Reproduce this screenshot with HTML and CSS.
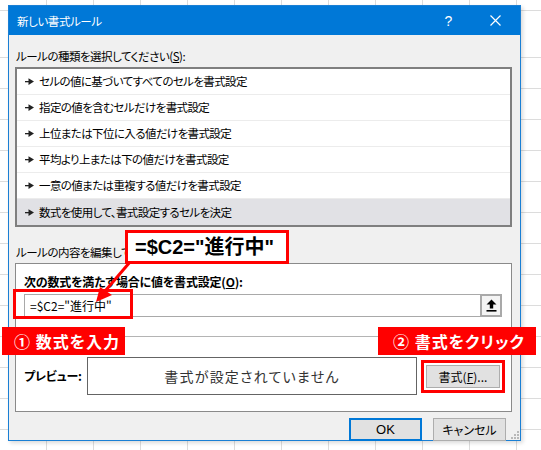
FILE: index.html
```html
<!DOCTYPE html>
<html lang="ja">
<head>
<meta charset="utf-8">
<title>新しい書式ルール</title>
<link rel="stylesheet" href="styles.css">
</head>
<body>
<div class="dialog">
  <div class="titlebar">
    <span class="title">新しい書式ルール</span>
    <span class="help">?</span>
    <span class="close"><svg width="11" height="11" viewBox="0 0 11 11"><path d="M0.5 0.5 L10.5 10.5 M10.5 0.5 L0.5 10.5" stroke="#fff" stroke-width="1.2" fill="none"/></svg></span>
  </div>
  <div class="content">
    <div class="label">ルールの種類を選択してください(<u>S</u>):</div>
    <ul class="rules">
      <li><svg class="bullet" width="9" height="7" viewBox="0 0 9 7"><rect x="0" y="3" width="4" height="1.3" fill="#222"/><polygon points="3.5,0.3 9,3.6 3.5,6.9" fill="#222"/></svg>セルの値に基づいてすべてのセルを書式設定</li>
      <li><svg class="bullet" width="9" height="7" viewBox="0 0 9 7"><rect x="0" y="3" width="4" height="1.3" fill="#222"/><polygon points="3.5,0.3 9,3.6 3.5,6.9" fill="#222"/></svg>指定の値を含むセルだけを書式設定</li>
      <li><svg class="bullet" width="9" height="7" viewBox="0 0 9 7"><rect x="0" y="3" width="4" height="1.3" fill="#222"/><polygon points="3.5,0.3 9,3.6 3.5,6.9" fill="#222"/></svg>上位または下位に入る値だけを書式設定</li>
      <li><svg class="bullet" width="9" height="7" viewBox="0 0 9 7"><rect x="0" y="3" width="4" height="1.3" fill="#222"/><polygon points="3.5,0.3 9,3.6 3.5,6.9" fill="#222"/></svg>平均より上または下の値だけを書式設定</li>
      <li><svg class="bullet" width="9" height="7" viewBox="0 0 9 7"><rect x="0" y="3" width="4" height="1.3" fill="#222"/><polygon points="3.5,0.3 9,3.6 3.5,6.9" fill="#222"/></svg>一意の値または重複する値だけを書式設定</li>
      <li class="selected"><svg class="bullet" width="9" height="7" viewBox="0 0 9 7"><rect x="0" y="3" width="4" height="1.3" fill="#222"/><polygon points="3.5,0.3 9,3.6 3.5,6.9" fill="#222"/></svg>数式を使用して、書式設定するセルを決定</li>
    </ul>
    <div class="label label2">ルールの内容を編集してください(<u>E</u>):</div>
    <div class="panel">
      <div class="label bold">次の数式を満たす場合に値を書式設定(<u>O</u>):</div>
      <div class="formula-row">
        <div class="input">=$C2="進行中"</div>
        <div class="refbtn"><svg width="11" height="13" viewBox="0 0 11 13"><polygon points="5.5,0.5 10.5,5.5 7.2,5.5 7.2,9.5 3.8,9.5 3.8,5.5 0.5,5.5" fill="#000"/><rect x="0.5" y="11" width="10" height="1.6" fill="#000"/></svg></div>
      </div>
      <div class="separator"></div>
      <div class="preview-row">
        <div class="label bold preview-label">プレビュー:</div>
        <div class="preview">書式が設定されていません</div>
        <div class="btn format">書式(<u>F</u>)...</div>
      </div>
    </div>
    <div class="footer">
      <div class="btn ok">OK</div>
      <div class="btn">キャンセル</div>
    </div>
  </div>
  <svg class="grip" width="8" height="8" viewBox="0 0 8 8"><rect x="6" y="0" width="2" height="2" fill="#b8b8b8"/><rect x="3" y="3" width="2" height="2" fill="#b8b8b8"/><rect x="6" y="3" width="2" height="2" fill="#b8b8b8"/><rect x="0" y="6" width="2" height="2" fill="#b8b8b8"/><rect x="3" y="6" width="2" height="2" fill="#b8b8b8"/><rect x="6" y="6" width="2" height="2" fill="#b8b8b8"/></svg>
</div>

<div class="hl-input"></div>
<svg class="arrow" width="60" height="50" viewBox="0 0 60 50"><line x1="38" y1="5" x2="14" y2="33" stroke="#ff0000" stroke-width="3"/><polygon points="4,45 8,30 20,38" fill="#ff0000"/></svg>
<div class="callout">=$C2="進行中"</div>
<div class="tag tag1">① 数式を入力</div>
<div class="tag tag2">② 書式をクリック</div>
</body>
</html>
```
FILE: styles.css
```css
html, body {
  margin: 0;
  padding: 0;
  width: 541px;
  height: 450px;
  overflow: hidden;
}
body {
  position: relative;
  font-family: "Noto Sans CJK JP", "Noto Sans", sans-serif;
  font-feature-settings: "palt";
  background-color: #ffffff;
  background-image:
    repeating-linear-gradient(180deg, transparent 0 30px, #dcdcdc 30px 31px),
    repeating-linear-gradient(90deg, transparent 0 46px, #dcdcdc 46px 47px);
  background-position: 0 27px, 0 0;
}
.dialog {
  position: absolute;
  left: 8px;
  top: 5px;
  width: 511px;
  height: 434px;
  border: 1px solid #1a7fd4;
  background: #f0f0f0;
  box-shadow: 2px 2px 4px rgba(0,0,0,0.15);
}
.titlebar {
  height: 29px;
  background: #0078d7;
  color: #fff;
  display: flex;
  align-items: center;
  padding-left: 8px;
  font-size: 11.5px;
  letter-spacing: -0.4px;
}
.title { flex: 1; }
.help {
  font-family: "Liberation Sans", sans-serif;
  font-size: 14px;
  margin-right: 38px;
}
.close { display: flex; margin-right: 19px; }
.content {
  padding: 13px 8px 9px 6px;
}
.label {
  font-size: 11.5px;
  letter-spacing: -0.5px;
  line-height: 16px;
  height: 16px;
  color: #000;
  white-space: nowrap;
  padding-left: 1px;
}
.bold {
  font-weight: 700;
  font-size: 12px;
  letter-spacing: -0.2px;
}
.rules {
  list-style: none;
  margin: 3px 0 0 0;
  padding: 0;
  border: 2px solid #7f7f7f;
  background: #fff;
}
.rules li {
  height: 25px;
  line-height: 25px;
  border-bottom: 1px solid #ececec;
  font-size: 11.5px;
  letter-spacing: -0.6px;
  display: flex;
  align-items: center;
  padding-left: 8px;
  color: #000;
}
.rules li:last-child { border-bottom: 0; height: 26px; }
.rules li.selected { background: #e1e1e5; }
.bullet { margin-right: 5px; flex: none; }
.label2 { margin-top: 17px; }
.panel {
  margin-top: 3px;
  height: 137px;
  border: 1px solid #8a8a8a;
  background: #fff;
  padding: 10px 9px 0 0;
  box-sizing: content-box;
}
.panel > .label { padding-left: 8px; }
.formula-row {
  display: flex;
  margin-top: 4px;
  margin-left: 8px;
  height: 23px;
}
.input {
  flex: 1;
  border: 1px solid #a9a9a9;
  border-right: 0;
  font-size: 12px;
  line-height: 21px;
  padding-left: 5px;
}
.refbtn {
  width: 18px;
  height: 19px;
  border: 2px solid #a9a9a9;
  background: #f4f4f4;
  display: flex;
  align-items: center;
  justify-content: center;
}
.separator {
  height: 1px;
  background: #b4b4b4;
  margin-top: 19px;
}
.preview-row {
  display: flex;
  align-items: center;
  margin-top: 20px;
  height: 38px;
}
.preview-label { width: 63px; padding-left: 8px; }
.preview {
  width: 328px;
  height: 36px;
  border: 1px solid #646464;
  font-size: 14px;
  letter-spacing: 1.2px;
  color: #333;
  display: flex;
  align-items: center;
  justify-content: center;
}
.btn {
  width: 71px;
  height: 21px;
  border: 1px solid #adadad;
  background: #e1e1e1;
  font-size: 12px;
  display: flex;
  align-items: center;
  justify-content: center;
  color: #000;
}
.format {
  margin-left: 9px;
  width: 72px;
  outline: 3px solid #ff0000;
  outline-offset: 2px;
}
.footer {
  display: flex;
  justify-content: flex-end;
  gap: 11px;
  margin-top: 6px;
  padding-right: 6px;
}
.ok {
  width: 69px;
  height: 19px;
  border: 2px solid #0078d7;
  font-family: "Liberation Sans", sans-serif;
  font-size: 13px;
}
.grip {
  position: absolute;
  right: 1px;
  bottom: 1px;
}
.hl-input {
  position: absolute;
  left: 13px;
  top: 289px;
  width: 114px;
  height: 24px;
  border: 3px solid #ff0000;
}
.arrow {
  position: absolute;
  left: 92px;
  top: 257px;
}
.callout {
  position: absolute;
  left: 125px;
  top: 230px;
  width: 151px;
  height: 28px;
  border: 3px solid #ff0000;
  background: #fff;
  font-family: "Liberation Sans", "Noto Sans CJK JP", sans-serif;
  font-weight: 700;
  font-size: 20px;
  line-height: 28px;
  padding-left: 7px;
  color: #000;
  white-space: nowrap;
}
.tag {
  position: absolute;
  height: 28px;
  background: #ff0000;
  color: #fff;
  font-weight: 700;
  font-size: 16px;
  line-height: 28px;
  white-space: nowrap;
  letter-spacing: 1px;
}
.tag1 {
  left: 2px;
  top: 327px;
  width: 111px;
  padding-left: 12px;
}
.tag2 {
  left: 378px;
  top: 327px;
  width: 143px;
  padding-left: 15px;
  letter-spacing: 1px;
}
```
